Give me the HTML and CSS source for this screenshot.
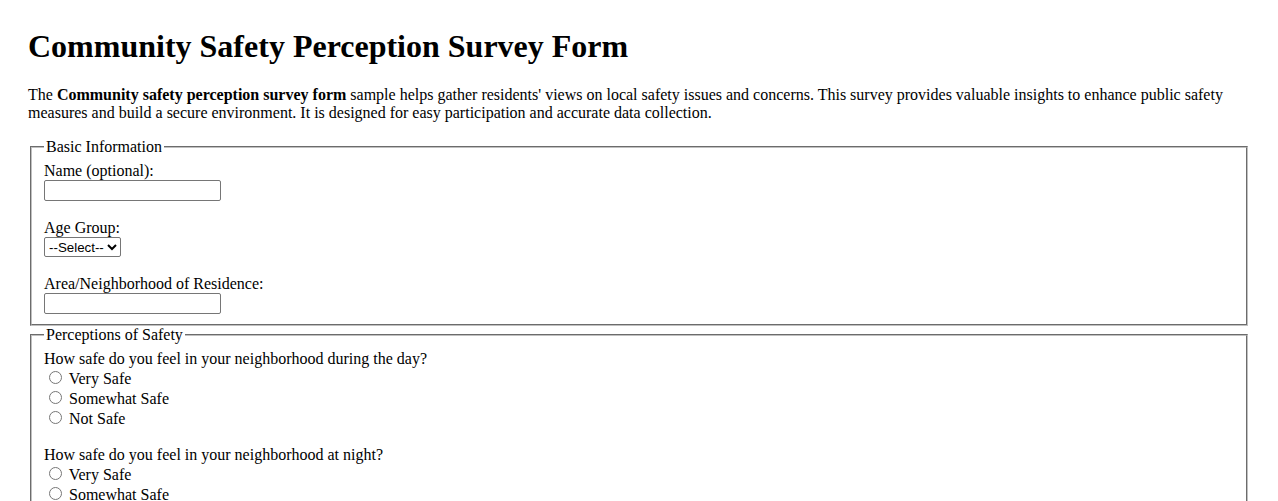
FILE: index.html
```html
<!DOCTYPE html>
<html lang="en">
<head>
<meta charset="utf-8">
<title>Community Safety Perception Survey Form</title>
<link rel="stylesheet" href="styles.css">
</head>
<body>
<div class="page">
<h1 class="title">Community Safety Perception Survey Form</h1>
<p class="intro">The <strong>Community safety perception survey form</strong> sample helps gather residents' views on local safety issues and concerns. This survey provides valuable insights to enhance public safety measures and build a secure environment. It is designed for easy participation and accurate data collection.</p>
<form class="survey">
<fieldset class="group">
<legend>Basic Information</legend>
<label for="name">Name (optional):</label><br>
<input class="text-field" type="text" id="name" name="name"><br><br>
<label for="age">Age Group:</label><br>
<select class="select-field" id="age" name="age">
<option>--Select--</option>
<option>Under 18</option>
<option>18-24</option>
<option>25-34</option>
<option>35-44</option>
<option>45-54</option>
<option>55-64</option>
<option>65+</option>
</select><br><br>
<label for="area">Area/Neighborhood of Residence:</label><br>
<input class="text-field" type="text" id="area" name="area">
</fieldset>
<fieldset class="group">
<legend>Perceptions of Safety</legend>
<label>How safe do you feel in your neighborhood during the day?</label><br>
<input class="radio" type="radio" id="day1" name="day"> <label for="day1">Very Safe</label><br>
<input class="radio" type="radio" id="day2" name="day"> <label for="day2">Somewhat Safe</label><br>
<input class="radio" type="radio" id="day3" name="day"> <label for="day3">Not Safe</label><br><br>
<label>How safe do you feel in your neighborhood at night?</label><br>
<input class="radio" type="radio" id="night1" name="night"> <label for="night1">Very Safe</label><br>
<input class="radio" type="radio" id="night2" name="night"> <label for="night2">Somewhat Safe</label><br>
<input class="radio" type="radio" id="night3" name="night"> <label for="night3">Not Safe</label><br><br>
<label>Have you experienced or witnessed any crime in the past year?</label><br>
<input class="radio" type="radio" id="crime1" name="crime"> <label for="crime1">Yes</label><br>
<input class="radio" type="radio" id="crime2" name="crime"> <label for="crime2">No</label>
</fieldset>
</form>
</div>
</body>
</html>
```

FILE: styles.css
```css
html, body {
  background: #ffffff;
  color: #000000;
}
body {
  margin: 8px;
  font-family: "Liberation Serif", "Times New Roman", serif;
  font-size: 16px;
}
.page {
  padding: 20px;
}
.title {
  font-size: 32px;
  font-weight: bold;
  margin: 0 0 21.44px 0;
}
.intro {
  margin: 0 0 16px 0;
}
.group {
  margin: 0 2px;
  padding: 0.35em 0.75em 0.625em;
  border: 2px groove #c0c0c0;
}
.group legend {
  padding: 0 2px;
}
.text-field {
  font-family: "Liberation Sans", Arial, sans-serif;
  font-size: 13.33px;
  box-sizing: border-box;
  width: 177px;
  height: 21px;
  padding: 1px 2px;
  border: 1px solid #767676;
  border-radius: 2px;
  margin: 0;
}
.select-field {
  font-family: "Liberation Sans", Arial, sans-serif;
  font-size: 13.33px;
  box-sizing: border-box;
  height: 20px;
  width: 77px;
  margin: 0;
  border: 1px solid #767676;
  border-radius: 2px;
  background: #ffffff;
  color: #000000;
}
.radio {
  margin: 3px 3px 0 5px;
}
```
